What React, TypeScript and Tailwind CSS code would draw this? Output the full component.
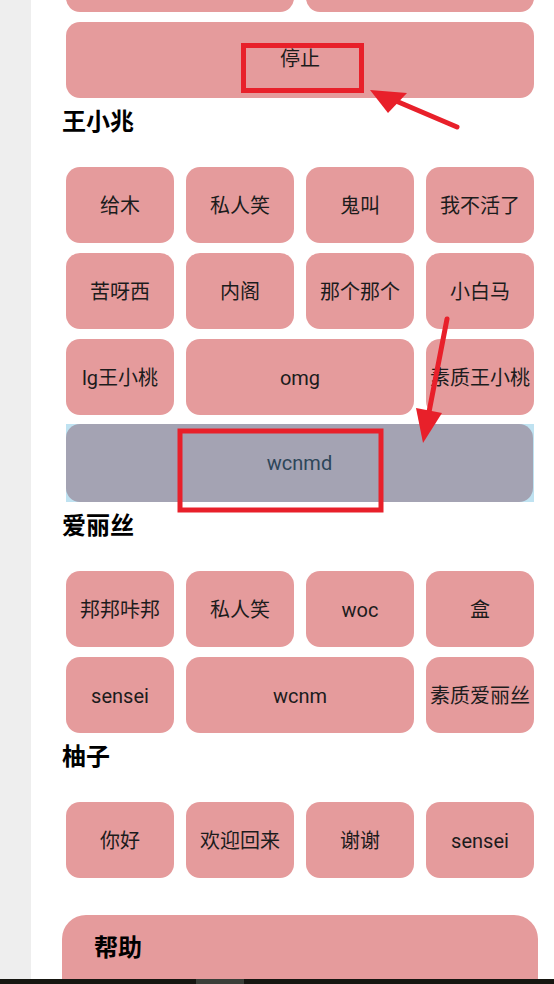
const pink = "bg-[#e59b9c]";

function Btn({ label, span = "" }: { label: string; span?: string }) {
  return (
    <button
      className={`${span} h-[76px] rounded-[14px] ${pink} flex items-center justify-center whitespace-nowrap pt-[1px] text-[20px] text-[#1c1c1c]`}
    >
      {label}
    </button>
  );
}

function Heading({ children }: { children: string }) {
  return <h3 className="mt-[10px] mb-[31px] text-[24px] font-bold leading-[28px] text-black">{children}</h3>;
}

function Grid({ children }: { children: React.ReactNode }) {
  return <div className="grid grid-cols-4 gap-x-[12px] gap-y-[10px] px-[4px]">{children}</div>;
}

export default function App() {
  return (
    <div className="relative flex h-[984px] w-[554px] flex-col overflow-hidden bg-white font-['Roboto','Noto_Sans_CJK_SC',sans-serif]">
      <div className="flex min-h-0 flex-1">
        <div className="w-[31px] bg-[#eeeeee]" />
        <div className="flex-1 overflow-hidden pl-[31px] pr-[16px]">
          <div className="-mt-[64px]">
            <Grid>
              <Btn label="" span="col-span-2" />
              <Btn label="" span="col-span-2" />
              <button className={`col-span-4 h-[76px] rounded-[14px] ${pink} flex items-center justify-center pb-[2px] text-[20px] text-[#1c1c1c]`}>
                停止
              </button>
            </Grid>

            <Heading>王小兆</Heading>
            <Grid>
              <Btn label="给木" />
              <Btn label="私人笑" />
              <Btn label="鬼叫" />
              <Btn label="我不活了" />
              <Btn label="苦呀西" />
              <Btn label="内阁" />
              <Btn label="那个那个" />
              <Btn label="小白马" />
              <Btn label="lg王小桃" />
              <Btn label="omg" span="col-span-2" />
              <Btn label="素质王小桃" />
              <div className="col-span-4 -mt-[1px] h-[78px] bg-[#bfe2f1] pr-[1px]">
                <button className="flex h-full w-full items-center justify-center rounded-[14px] bg-[#a4a3b3] text-[20px] text-[#2d4659]">
                  wcnmd
                </button>
              </div>
            </Grid>

            <Heading>爱丽丝</Heading>
            <Grid>
              <Btn label="邦邦咔邦" />
              <Btn label="私人笑" />
              <Btn label="woc" />
              <Btn label="盒" />
              <Btn label="sensei" />
              <Btn label="wcnm" span="col-span-2" />
              <Btn label="素质爱丽丝" />
            </Grid>

            <Heading>柚子</Heading>
            <Grid>
              <Btn label="你好" />
              <Btn label="欢迎回来" />
              <Btn label="谢谢" />
              <Btn label="sensei" />
            </Grid>

            <div className={`mt-[37px] h-[200px] rounded-[24px] ${pink} pl-[32px] pt-[19px]`}>
              <h3 className="text-[24px] font-bold leading-[28px] text-black">帮助</h3>
            </div>
          </div>
        </div>
      </div>
      <div className="flex h-[5px] bg-[#161611]">
        <div className="ml-[196px] h-full w-[48px] bg-[#3b3f39]" />
      </div>

      <svg className="pointer-events-none absolute inset-0" width="554" height="984" viewBox="0 0 554 984">
        <g fill="none" stroke="#e8202a" strokeWidth="5">
          <rect x="243.5" y="45.5" width="118" height="45" />
          <rect x="180" y="431" width="201" height="79" />
        </g>
        <g stroke="#e8202a" strokeWidth="5" strokeLinecap="round">
          <line x1="457" y1="127" x2="396" y2="101" />
          <line x1="447" y1="319" x2="429" y2="412" />
        </g>
        <g fill="#e8202a">
          <polygon points="370,90 407,93 388,113" />
          <polygon points="423,443 442,413 416,408" />
        </g>
      </svg>
    </div>
  );
}
